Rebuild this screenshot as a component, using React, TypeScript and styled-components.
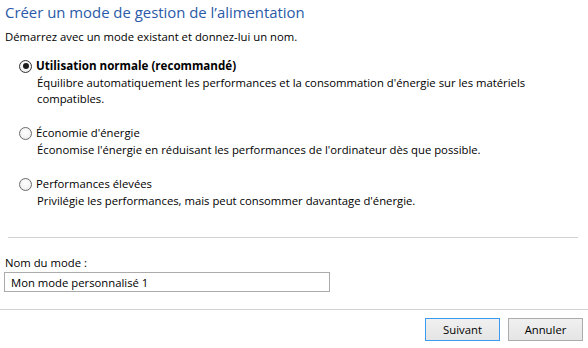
import React from 'react';
import styled, { createGlobalStyle } from 'styled-components';

const Global = createGlobalStyle`
  html, body { margin: 0; padding: 0; background: #fff; }
  body {
    font-family: "Open Sans", "Noto Sans", sans-serif;
    font-size: 11.3px;
    color: #000;
    width: 588px;
    height: 348px;
    overflow: hidden;
  }
`;

const Page = styled.div`
  display: flex;
  flex-direction: column;
  width: 588px;
  height: 348px;
  padding-top: 2px;
  box-sizing: border-box;
`;

const Title = styled.h1`
  margin: 0;
  padding-left: 5px;
  font-size: 14.9px;
  line-height: 21px;
  font-weight: 400;
  color: #2a5aa8;
`;

const Subtitle = styled.p`
  margin: 6px 0 0;
  padding-left: 5px;
  line-height: 16px;
`;

const Options = styled.div`
  display: flex;
  flex-direction: column;
  gap: 18px;
  margin-top: 13px;
  padding-left: 19px;
`;

const Option = styled.div`
  display: flex;
  flex-direction: column;
`;

const OptionHead = styled.label<{ $selected: boolean }>`
  display: flex;
  align-items: center;
  gap: 4px;
  line-height: 16px;
  font-weight: ${p => (p.$selected ? 700 : 400)};
  font-size: ${p => (p.$selected ? '11.6px' : '11.3px')};
`;

const Radio = styled.span<{ $checked: boolean }>`
  position: relative;
  flex: none;
  width: 13px;
  height: 13px;
  box-sizing: border-box;
  border-radius: 50%;
  border: 1px solid ${p => (p.$checked ? '#333' : '#6a6a6a')};
  background: radial-gradient(circle at 50% 40%, #ffffff 0%, #f2f2f2 60%, #e2e2e2 100%);
  &::after {
    content: '';
    display: ${p => (p.$checked ? 'block' : 'none')};
    position: absolute;
    inset: 2.5px;
    border-radius: 50%;
    background: #1a1a1a;
  }
`;

const Desc = styled.p`
  margin: 1px 0 0;
  padding-left: 18px;
  line-height: 16px;
`;

const Separator = styled.div<{ $inset: boolean }>`
  height: 1px;
  background: #d0d0d0;
  margin: ${p => (p.$inset ? '0 10px 0 8px' : '0')};
`;

const UpperSep = styled(Separator)`
  margin-top: 28px;
`;

const LowerSep = styled(Separator)`
  margin-top: 17px;
`;

const Field = styled.div`
  display: flex;
  flex-direction: column;
  margin-top: 17px;
  padding-left: 4px;
`;

const FieldLabel = styled.label`
  padding-left: 1px;
  line-height: 16px;
`;

const Input = styled.input`
  margin: 1px 0 0;
  width: 326px;
  height: 20px;
  box-sizing: border-box;
  border: 1px solid #ababab;
  padding: 0 6px;
  font: inherit;
  color: #000;
  outline: none;
`;

const Buttons = styled.div`
  display: flex;
  justify-content: flex-end;
  gap: 8px;
  margin-top: 8px;
  padding-right: 5px;
`;

const Button = styled.button<{ $default: boolean }>`
  width: 75px;
  height: 23px;
  box-sizing: border-box;
  border: 1px solid ${p => (p.$default ? '#3c9af0' : '#acacac')};
  background: linear-gradient(#f0f0f0, #e5e5e5);
  font: inherit;
  color: #000;
  padding: 0;
`;

const options = [
  {
    label: 'Utilisation normale (recommandé)',
    desc: [
      "Équilibre automatiquement les performances et la consommation d'énergie sur les matériels",
      'compatibles.',
    ],
    checked: true,
  },
  {
    label: "Économie d'énergie",
    desc: ["Économise l'énergie en réduisant les performances de l'ordinateur dès que possible."],
    checked: false,
  },
  {
    label: 'Performances élevées',
    desc: ["Privilégie les performances, mais peut consommer davantage d'énergie."],
    checked: false,
  },
];

export default function App() {
  return (
    <>
      <Global />
      <Page>
        <Title>Créer un mode de gestion de l’alimentation</Title>
        <Subtitle>Démarrez avec un mode existant et donnez-lui un nom.</Subtitle>
        <Options>
          {options.map(o => (
            <Option key={o.label}>
              <OptionHead $selected={o.checked}>
                <Radio $checked={o.checked} />
                {o.label}
              </OptionHead>
              <Desc>
                {o.desc.map((line, i) => (
                  <React.Fragment key={i}>
                    {i > 0 && <br />}
                    {line}
                  </React.Fragment>
                ))}
              </Desc>
            </Option>
          ))}
        </Options>
        <UpperSep $inset />
        <Field>
          <FieldLabel>Nom du mode :</FieldLabel>
          <Input defaultValue="Mon mode personnalisé 1" />
        </Field>
        <LowerSep $inset={false} />
        <Buttons>
          <Button $default>Suivant</Button>
          <Button $default={false}>Annuler</Button>
        </Buttons>
      </Page>
    </>
  );
}
